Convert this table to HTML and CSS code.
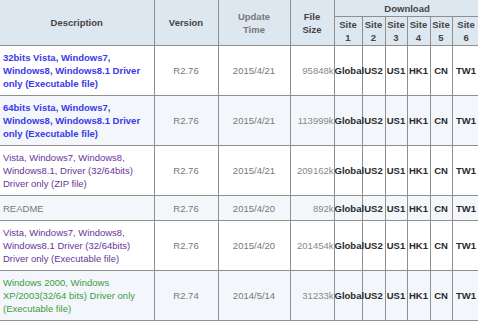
FILE: index.html
```html
<!DOCTYPE html>
<html lang="en">
<head>
    <meta charset="UTF-8">
    <meta name="viewport" content="width=device-width, initial-scale=1.0">
    <title>Driver Download</title>
    <link rel="stylesheet" href="styles.css">
</head>
<body>
    <table class="downloads">
        <colgroup>
            <col class="col-desc">
            <col class="col-ver">
            <col class="col-date">
            <col class="col-size">
            <col class="col-s1">
            <col class="col-s2">
            <col class="col-s3">
            <col class="col-s4">
            <col class="col-s5">
            <col class="col-s6">
        </colgroup>
        <thead>
            <tr>
                <th rowspan="2">Description</th>
                <th rowspan="2">Version</th>
                <th rowspan="2" class="dim">Update<br>Time</th>
                <th rowspan="2">File<br>Size</th>
                <th colspan="6" class="group">Download</th>
            </tr>
            <tr>
                <th>Site<br>1</th>
                <th>Site<br>2</th>
                <th>Site<br>3</th>
                <th>Site<br>4</th>
                <th>Site<br>5</th>
                <th>Site<br>6</th>
            </tr>
        </thead>
        <tbody>
            <tr>
                <td class="desc link">32bits Vista, Windows7, Windows8, Windows8.1 Driver only (Executable file)</td>
                <td class="ver">R2.76</td>
                <td class="date">2015/4/21</td>
                <td class="size">95848k</td>
                <td class="site">Global</td><td class="site">US2</td><td class="site">US1</td><td class="site">HK1</td><td class="site">CN</td><td class="site">TW1</td>
            </tr>
            <tr class="alt">
                <td class="desc link">64bits Vista, Windows7, Windows8, Windows8.1 Driver only (Executable file)</td>
                <td class="ver">R2.76</td>
                <td class="date">2015/4/21</td>
                <td class="size">113999k</td>
                <td class="site">Global</td><td class="site">US2</td><td class="site">US1</td><td class="site">HK1</td><td class="site">CN</td><td class="site">TW1</td>
            </tr>
            <tr>
                <td class="desc visited">Vista, Windows7, Windows8, Windows8.1, Driver (32/64bits) Driver only (ZIP file)</td>
                <td class="ver">R2.76</td>
                <td class="date">2015/4/21</td>
                <td class="size">209162k</td>
                <td class="site">Global</td><td class="site">US2</td><td class="site">US1</td><td class="site">HK1</td><td class="site">CN</td><td class="site">TW1</td>
            </tr>
            <tr class="alt">
                <td class="desc plain">README</td>
                <td class="ver">R2.76</td>
                <td class="date">2015/4/20</td>
                <td class="size">892k</td>
                <td class="site">Global</td><td class="site">US2</td><td class="site">US1</td><td class="site">HK1</td><td class="site">CN</td><td class="site">TW1</td>
            </tr>
            <tr>
                <td class="desc visited">Vista, Windows7, Windows8, Windows8.1 Driver (32/64bits) Driver only (Executable file)</td>
                <td class="ver">R2.76</td>
                <td class="date">2015/4/20</td>
                <td class="size">201454k</td>
                <td class="site">Global</td><td class="site">US2</td><td class="site">US1</td><td class="site">HK1</td><td class="site">CN</td><td class="site">TW1</td>
            </tr>
            <tr class="alt">
                <td class="desc legacy">Windows 2000, Windows XP/2003(32/64 bits) Driver only (Executable file)</td>
                <td class="ver">R2.74</td>
                <td class="date">2014/5/14</td>
                <td class="size">31233k</td>
                <td class="site">Global</td><td class="site">US2</td><td class="site">US1</td><td class="site">HK1</td><td class="site">CN</td><td class="site">TW1</td>
            </tr>
        </tbody>
    </table>
</body>
</html>
```

FILE: styles.css
```css
body {
    margin: 0;
    background: #fff;
    font-family: "Liberation Sans", Arial, sans-serif;
    font-size: 9.5px;
    line-height: 13px;
    overflow: hidden;
}
.downloads {
    border-collapse: collapse;
    table-layout: fixed;
    width: 480px;
}
.col-desc { width: 154px; }
.col-ver { width: 64px; }
.col-date { width: 72px; }
.col-size { width: 44px; }
.col-s1 { width: 28px; }
.col-s2 { width: 23px; }
.col-s3 { width: 22px; }
.col-s4 { width: 23px; }
.col-s5 { width: 22px; }
.col-s6 { width: 28px; }
.downloads th,
.downloads td {
    border: 1px solid #8f8f8f;
    padding: 0;
    vertical-align: middle;
    white-space: nowrap;
}
.downloads tr > :first-child {
    border-left: none;
}
.downloads thead tr:first-child th {
    border-top: none;
}
.downloads th {
    background: #dde7f0;
    color: #444;
    font-weight: bold;
    text-align: center;
}
.downloads th.dim {
    color: #777;
}
.downloads th.group {
    height: 16px;
}
.downloads thead tr:last-child th {
    height: 28px;
}
.downloads tbody tr {
    height: 50px;
}
.downloads tbody tr:nth-child(4) {
    height: 25px;
}
.downloads tr.alt td {
    background: #f3f7fb;
}
.desc {
    padding-left: 3px !important;
    padding-right: 2px !important;
    white-space: normal !important;
}
.link {
    color: #3a3ae8;
    font-weight: bold;
}
.visited {
    color: #6b3399;
}
.plain {
    color: #777;
}
.legacy {
    color: #3f9a3f;
}
.ver,
.date {
    color: #777;
    text-align: center;
}
.size {
    color: #888;
    text-align: right;
}
.site {
    color: #2a2a2a;
    font-weight: bold;
    text-align: center;
}
```
